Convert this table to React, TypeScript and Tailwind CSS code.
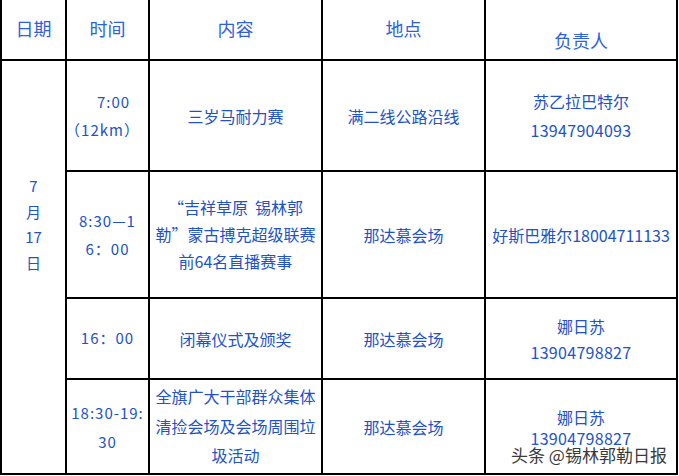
import React from 'react';

const cell = 'border-r-2 border-b-2 border-black flex flex-col items-center justify-center text-center';

export default function App() {
  return (
    <div
      className="relative w-[679px] h-[476px] bg-white overflow-hidden text-[16px] text-[#2152c9]"
      style={{ fontFamily: '"Noto Sans CJK SC", "Noto Sans", sans-serif' }}
    >
      <div className="grid grid-cols-[65px_83px_173px_163px_192px] grid-rows-[61px_111px_127px_81px_95px] w-[678px] border-l-2 border-black">
        {/* header */}
        <div className={`${cell} text-[18px] text-[#2e62dc] pb-[3px]`}>日期</div>
        <div className={`${cell} text-[18px] text-[#2e62dc] pb-[3px]`}>时间</div>
        <div className={`${cell} text-[18px] text-[#2e62dc] pb-[3px]`}>内容</div>
        <div className={`${cell} text-[18px] text-[#2e62dc] pb-[3px]`}>地点</div>
        <div className={`${cell} text-[18px] text-[#2e62dc] pt-[22px]`}>负责人</div>

        {/* date spans all rows */}
        <div className={`${cell} row-span-4 !justify-start pt-[112px] leading-[25.5px] text-[15px]`}>
          <span>7</span>
          <span>月</span>
          <span>17</span>
          <span>日</span>
        </div>

        {/* row 1 */}
        <div className={`${cell} leading-[28px] text-[15px] tracking-[1px]`}>
          <span className="pl-[12px]">7:00</span>
          <span className="pr-[10px]">（12km）</span>
        </div>
        <div className={cell}>三岁马耐力赛</div>
        <div className={cell}>满二线公路沿线</div>
        <div className={`${cell} leading-[29px]`}>
          <span>苏乙拉巴特尔</span>
          <span className="tracking-[0.3px]">13947904093</span>
        </div>

        {/* row 2 */}
        <div className={`${cell} leading-[28px] text-[15px] tracking-[1px]`}>
          <span>8:30—1</span>
          <span>6：00</span>
        </div>
        <div className={`${cell} leading-[27px]`}>
          <span>“吉祥草原&nbsp;&nbsp;锡林郭</span>
          <span>勒”蒙古搏克超级联赛</span>
          <span>前64名直播赛事</span>
        </div>
        <div className={cell}>那达慕会场</div>
        <div className={cell}>
          <span className="whitespace-nowrap">好斯巴雅尔18004711133</span>
        </div>

        {/* row 3 */}
        <div className={`${cell} text-[15px] tracking-[1px]`}>16：00</div>
        <div className={cell}>闭幕仪式及颁奖</div>
        <div className={cell}>那达慕会场</div>
        <div className={`${cell} leading-[26px]`}>
          <span>娜日苏</span>
          <span className="tracking-[0.3px]">13904798827</span>
        </div>

        {/* row 4 */}
        <div className={`${cell} leading-[29px] text-[15px] tracking-[1px]`}>
          <span>18:30-19:</span>
          <span>30</span>
        </div>
        <div className={`${cell} leading-[29.5px]`}>
          <span>全旗广大干部群众集体</span>
          <span>清捡会场及会场周围垃</span>
          <span>圾活动</span>
        </div>
        <div className={cell}>那达慕会场</div>
        <div className={`${cell} leading-[21px] pt-[2px]`}>
          <span>娜日苏</span>
          <span className="tracking-[0.3px]">13904798827</span>
        </div>
      </div>

      {/* watermark overlay */}
      <div
        className="absolute left-[511px] top-[442px] text-[17px] leading-[26px] text-[#3a3a3a] whitespace-nowrap"
        style={{ textShadow: '0 0 2px #fff, 0 0 3px #fff' }}
      >
        头条 @锡林郭勒日报
      </div>
    </div>
  );
}
